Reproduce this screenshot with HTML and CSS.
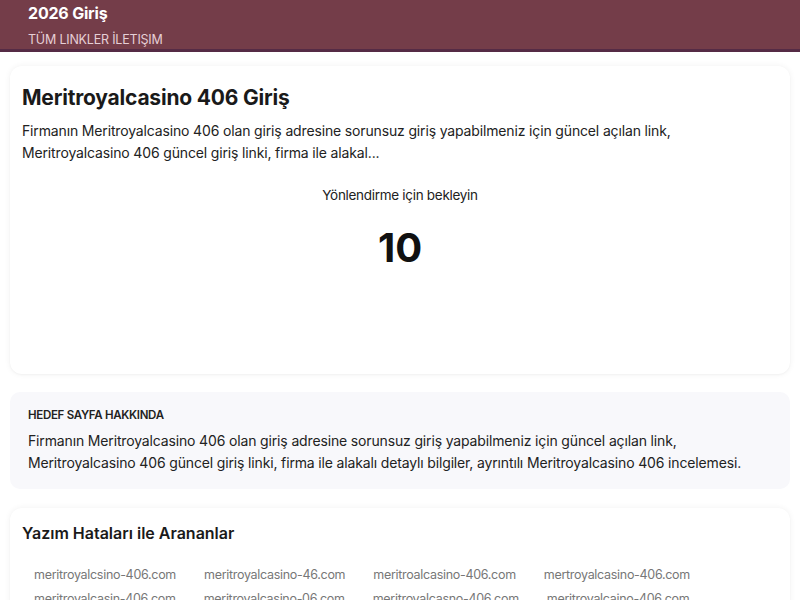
FILE: index.html
```html
<!DOCTYPE html>
<html lang="tr">
<head>
<meta charset="utf-8">
<title>Meritroyalcasino 406 Giriş</title>
<link rel="stylesheet" href="styles.css">
</head>
<body>
<header class="topbar">
  <div class="brand">2026 Giriş</div>
  <nav class="nav"><a href="#">TÜM LINKLER</a> <a href="#">İLETIŞIM</a></nav>
</header>
<main class="page">
  <section class="card main-card">
    <h1 class="title">Meritroyalcasino 406 Giriş</h1>
    <p class="lead">Firmanın Meritroyalcasino 406 olan giriş adresine sorunsuz giriş yapabilmeniz için güncel açılan link, Meritroyalcasino 406 güncel giriş linki, firma ile alakal...</p>
    <div class="wait">Yönlendirme için bekleyin</div>
    <div class="count">10</div>
  </section>
  <section class="about">
    <h2 class="about-title">HEDEF SAYFA HAKKINDA</h2>
    <p class="about-text">Firmanın Meritroyalcasino 406 olan giriş adresine sorunsuz giriş yapabilmeniz için güncel açılan link, Meritroyalcasino 406 güncel giriş linki, firma ile alakalı detaylı bilgiler, ayrıntılı Meritroyalcasino 406 incelemesi.</p>
  </section>
  <section class="card typo-card">
    <h2 class="typo-title">Yazım Hataları ile Arananlar</h2>
    <div class="links">
      <a href="#">meritroyalcsino-406.com</a>
      <a href="#">meritroyalcasino-46.com</a>
      <a href="#">meritroalcasino-406.com</a>
      <a href="#">mertroyalcasino-406.com</a>
      <a href="#">meritroyalcasin-406.com</a>
      <a href="#">meritroyalcasino-06.com</a>
      <a href="#">meritroyalcasno-406.com</a>
      <a href="#">meritroyalcaino-406.com</a>
    </div>
  </section>
</main>
</body>
</html>
```

FILE: styles.css
```css
* { box-sizing: border-box; }
html, body { margin: 0; padding: 0; }
body {
  font-family: Inter, "Noto Sans", "DejaVu Sans", sans-serif;
  color: #1a1a1a;
  background: #fff;
  overflow: hidden;
}
.topbar {
  background: #743d49;
  border-bottom: 3px solid #552b45;
  height: 52px;
  padding: 3px 28px 0;
}
.brand {
  color: #fff;
  font-weight: 700;
  font-size: 16px;
  line-height: 20px;
  letter-spacing: -0.2px;
}
.nav {
  margin-top: 9px;
  font-size: 12.5px;
  line-height: 16px;
  letter-spacing: -0.2px;
}
.nav a { color: #e6cfd6; text-decoration: none; }
.page {
  padding: 14px 10px 0;
}
.card {
  background: #fff;
  border-radius: 12px;
  box-shadow: 0 0 6px rgba(0,0,0,0.06), 0 1px 2px rgba(0,0,0,0.03);
}
.main-card {
  padding: 18px 12px 12px;
  height: 308px;
}
.title {
  margin: 0;
  font-size: 21px;
  line-height: 28px;
  font-weight: 700;
  letter-spacing: -0.2px;
}
.lead {
  margin: 8px 0 0;
  font-size: 14px;
  line-height: 22px;
  letter-spacing: -0.15px;
  color: #222;
}
.wait {
  margin-top: 21px;
  text-align: center;
  font-size: 13.5px;
  line-height: 20px;
  letter-spacing: -0.3px;
  color: #222;
}
.count {
  margin-top: 18px;
  text-align: center;
  font-size: 40px;
  line-height: 50px;
  font-weight: 700;
  color: #111;
}
.about {
  margin-top: 18px;
  background: #f8f8fb;
  border-radius: 10px;
  padding: 16px 18px 14px;
  height: 97px;
}
.about-title {
  margin: 0;
  font-size: 11.5px;
  line-height: 14px;
  font-weight: 600;
  letter-spacing: -0.3px;
  color: #222;
}
.about-text {
  margin: 8px 0 0;
  font-size: 14px;
  line-height: 22px;
  letter-spacing: -0.15px;
  color: #222;
}
.typo-card {
  margin-top: 19px;
  padding: 14px 12px 12px;
}
.typo-title {
  margin: 0;
  font-size: 16px;
  line-height: 22px;
  font-weight: 600;
  letter-spacing: 0;
}
.links {
  display: flex;
  flex-wrap: wrap;
  column-gap: 28px;
  row-gap: 8px;
  padding: 23px 12px 0;
}
.links a {
  color: #777;
  text-decoration: none;
  font-size: 12.5px;
  line-height: 16px;
  letter-spacing: -0.3px;
}
```
